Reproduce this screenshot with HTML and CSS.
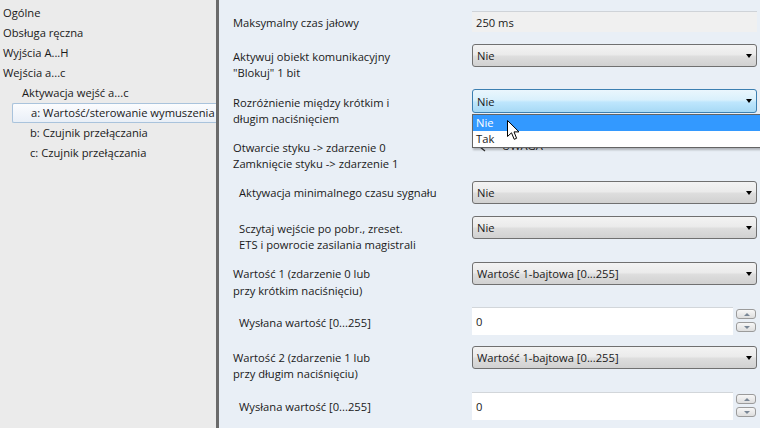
FILE: index.html
```html
<!DOCTYPE html>
<html lang="pl">
<head>
<meta charset="utf-8">
<title>Parametry</title>
<link rel="stylesheet" href="styles.css">
</head>
<body>
<div class="app">
  <aside class="tree">
    <div class="node l0">Ogólne</div>
    <div class="node l0">Obsługa ręczna</div>
    <div class="node l0">Wyjścia A...H</div>
    <div class="node l0">Wejścia a...c</div>
    <div class="node l1">Aktywacja wejść a...c</div>
    <div class="node l2 sel">a: Wartość/sterowanie wymuszenia</div>
    <div class="node l2">b: Czujnik przełączania</div>
    <div class="node l2">c: Czujnik przełączania</div>
  </aside>
  <div class="divider"></div>
  <main class="params">
    <div class="row r1">
      <div class="label p4">Maksymalny czas jałowy</div>
      <div class="ctrl"><div class="readonly">250 ms</div></div>
    </div>
    <div class="row r2">
      <div class="label p5">Aktywuj obiekt komunikacyjny<br>"Blokuj" 1 bit</div>
      <div class="ctrl"><div class="select">Nie<span class="arrow"></span></div></div>
    </div>
    <div class="row r3">
      <div class="label p6">Rozróżnienie między krótkim i<br>długim naciśnięciem</div>
      <div class="ctrl"><div class="select focus">Nie<span class="arrow"></span></div></div>
    </div>
    <div class="row r4">
      <div class="label p7">Otwarcie styku -&gt; zdarzenie 0<br>Zamknięcie styku -&gt; zdarzenie 1</div>
      <div class="ctrl"><div class="note"><svg class="note-icon" width="10" height="12" viewBox="0 0 10 12"><path d="M7 2 L2 7 L7 11" fill="none" stroke="#333" stroke-width="1.3"/></svg><span>UWAGA</span></div></div>
    </div>
    <div class="row r5">
      <div class="label p4 ind">Aktywacja minimalnego czasu sygnału</div>
      <div class="ctrl"><div class="select">Nie<span class="arrow"></span></div></div>
    </div>
    <div class="row r6">
      <div class="label p5 ind">Sczytaj wejście po pobr., zreset.<br>ETS i powrocie zasilania magistrali</div>
      <div class="ctrl"><div class="select">Nie<span class="arrow"></span></div></div>
    </div>
    <div class="row r7">
      <div class="label p3 lh17">Wartość 1 (zdarzenie 0 lub<br>przy krótkim naciśnięciu)</div>
      <div class="ctrl"><div class="select">Wartość 1-bajtowa [0...255]<span class="arrow"></span></div></div>
    </div>
    <div class="row r8">
      <div class="label p8 ind">Wysłana wartość [0...255]</div>
      <div class="ctrl spin-wrap"><div class="input">0</div><div class="spin"><span class="sb up"></span><span class="sb down"></span></div></div>
    </div>
    <div class="row r9">
      <div class="label p4">Wartość 2 (zdarzenie 1 lub<br>przy długim naciśnięciu)</div>
      <div class="ctrl"><div class="select">Wartość 1-bajtowa [0...255]<span class="arrow"></span></div></div>
    </div>
    <div class="row r10">
      <div class="label p7 ind">Wysłana wartość [0...255]</div>
      <div class="ctrl spin-wrap"><div class="input">0</div><div class="spin"><span class="sb up"></span><span class="sb down"></span></div></div>
    </div>

    <div class="dropdown">
      <div class="opt hot">Nie</div>
      <div class="opt">Tak</div>
    </div>
    <svg class="cursor" width="13" height="21" viewBox="0 0 13 21"><path d="M0.5 0.5 L0.5 16.5 L4.5 12.8 L7.2 19.3 L9.6 18.3 L7 11.9 L12 11.9 Z" fill="#fff" stroke="#000" stroke-width="1" stroke-linejoin="miter"/></svg>
  </main>
</div>
</body>
</html>
```

FILE: styles.css
```css
* { box-sizing: border-box; }
html, body {
  margin: 0;
  padding: 0;
  width: 760px;
  height: 428px;
  overflow: hidden;
}
body {
  font-family: "Open Sans", "Noto Sans", "DejaVu Sans", sans-serif;
  font-size: 11.2px;
  color: #1a1a1a;
}
.app {
  display: flex;
  width: 760px;
  height: 428px;
}
.tree {
  width: 216px;
  flex: none;
  background: #ebebeb;
  padding-top: 3px;
  overflow: hidden;
}
.node {
  height: 20px;
  line-height: 20px;
  white-space: nowrap;
}
.l0 { padding-left: 3px; }
.l1 { padding-left: 22px; }
.l2 { margin-left: 12px; padding-left: 18px; }
.sel {
  border: 1px solid #a9c3dc;
  border-right: none;
  border-radius: 2px 0 0 2px;
  line-height: 18px;
  background: linear-gradient(#fbfcfe, #e9eff7);
}
.divider {
  width: 3px;
  flex: none;
  background: #6a6a6a;
}
.params {
  position: relative;
  flex: 1;
  background: #e9eff6;
  padding: 11px 0 0 14px;
  overflow: hidden;
}
.row {
  display: grid;
  grid-template-columns: 239px 285px;
}
.r1 { height: 33px; }
.r2 { height: 45px; }
.r3 { height: 44px; }
.r4 { height: 48px; }
.r5 { height: 35px; }
.r6 { height: 46px; }
.r7 { height: 45px; }
.r8 { height: 39px; }
.r9 { height: 46px; }
.r10 { height: 36px; }
.label {
  line-height: 16px;
  white-space: nowrap;
}
.p3 { padding-top: 3px; }
.p4 { padding-top: 4px; }
.p5 { padding-top: 5px; }
.p6 { padding-top: 6px; }
.p7 { padding-top: 7px; }
.p8 { padding-top: 8px; }
.lh17 { line-height: 17px; }
.ind { padding-left: 6px; }

.readonly {
  height: 21px;
  line-height: 22px;
  padding-left: 4px;
  background: #f0f0f0;
  border-top: 1px solid #cfd3d8;
}
.select {
  position: relative;
  height: 23px;
  line-height: 22px;
  padding-left: 4px;
  border: 1px solid #707070;
  border-radius: 3px;
  background: linear-gradient(#f3f3f3 0%, #ebebeb 45%, #dddddd 55%, #d1d1d1 100%);
  white-space: nowrap;
}
.select.focus {
  height: 24px;
  line-height: 23px;
  border-color: #3c7fb1;
  background: linear-gradient(#eaf6fd 0%, #d9f0fc 45%, #bee6fd 55%, #a7d9f5 100%);
}
.arrow {
  position: absolute;
  right: 4px;
  top: 50%;
  margin-top: -2px;
  width: 0;
  height: 0;
  border-left: 3px solid transparent;
  border-right: 3px solid transparent;
  border-top: 4px solid #000;
}
.note {
  display: flex;
  align-items: center;
  gap: 14px;
  padding: 5px 0 0 6px;
  line-height: 16px;
}
.note-icon { flex: none; }
.spin-wrap {
  display: flex;
  gap: 3px;
  height: 28px;
}
.input {
  flex: 1;
  background: #fff;
  border-top: 1px solid #d2d6da;
  line-height: 28px;
  padding-left: 4px;
}
.spin {
  width: 21px;
  display: flex;
  flex-direction: column;
  gap: 3px;
  padding-top: 2px;
}
.sb {
  position: relative;
  display: block;
  width: 20px;
  height: 10px;
  border: 1px solid #9b9b9b;
  border-radius: 3px;
  background: linear-gradient(#f7f7f7, #dedede);
}
.sb::after {
  content: "";
  position: absolute;
  left: 7px;
  top: 3px;
  border-left: 3px solid transparent;
  border-right: 3px solid transparent;
}
.sb.up::after { border-bottom: 3px solid #7a8796; }
.sb.down::after { border-top: 3px solid #7a8796; }

.dropdown {
  position: absolute;
  left: 253px;
  top: 114px;
  width: 300px;
  border: 1px solid #646464;
  background: #fff;
  box-shadow: 1px 2px 2px rgba(0,0,0,0.25);
  padding: 0;
}
.opt {
  height: 16px;
  line-height: 16px;
  padding-left: 3px;
}
.opt.hot {
  background: #3399ff;
  color: #fff;
}
.cursor {
  position: absolute;
  left: 288px;
  top: 120px;
}
```
